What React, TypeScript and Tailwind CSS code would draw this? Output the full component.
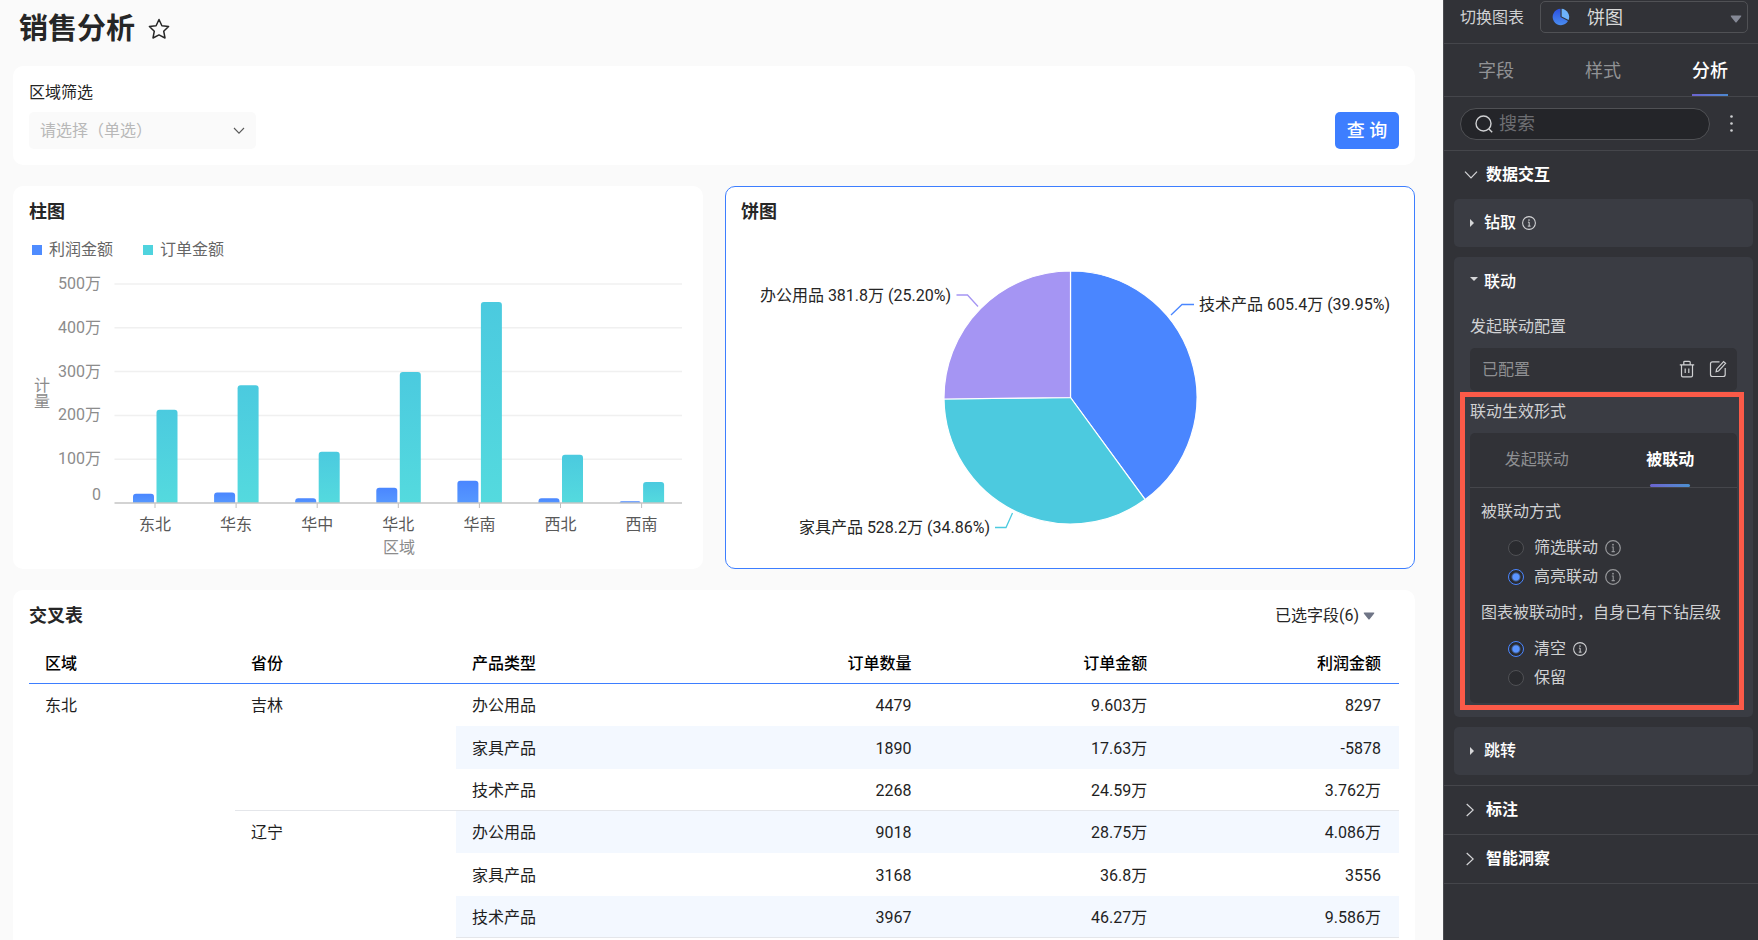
import React from "react";

const regions = [
  { name: "东北", profit: 21, orders: 213 },
  { name: "华东", profit: 24, orders: 269 },
  { name: "华中", profit: 11, orders: 117 },
  { name: "华北", profit: 35, orders: 299 },
  { name: "华南", profit: 51, orders: 459 },
  { name: "西北", profit: 11, orders: 110 },
  { name: "西南", profit: 4, orders: 48 },
];

const BASE_Y = 504;
const UNIT = 43.8;
const STEP = 81.1;
const PLOT_LEFT = 114.5;
const PLOT_RIGHT = 682;

function barPath(x: number, top: number, width: number) {
  const h = BASE_Y - top;
  const r = Math.min(3, h);
  return `M${x} ${BASE_Y}V${top + r}Q${x} ${top} ${x + r} ${top}H${x + width - r}Q${x + width} ${top} ${x + width} ${top + r}V${BASE_Y}Z`;
}

function BarChart() {
  return (
    <svg viewBox="14 263 688 306" className="min-h-0 w-full flex-1" role="img" aria-label="柱图">
      <defs>
        <linearGradient id="barBlue" x1="0" y1="0" x2="0" y2="1">
          <stop offset="0" stopColor="#4a86ff" />
          <stop offset="1" stopColor="#5698ff" />
        </linearGradient>
        <linearGradient id="barTeal" x1="0" y1="0" x2="0" y2="1">
          <stop offset="0" stopColor="#4bcadf" />
          <stop offset="1" stopColor="#54dade" />
        </linearGradient>
      </defs>
      {[1, 2, 3, 4, 5].map((n) => (
        <g key={n}>
          <line x1={PLOT_LEFT} x2={PLOT_RIGHT} y1={BASE_Y - n * UNIT} y2={BASE_Y - n * UNIT} stroke="#f0f0f0" strokeWidth="1.5" />
          <text x="101" y={BASE_Y - n * UNIT + 5} textAnchor="end" fontSize="16" fill="#8c8c8c">
            {n}00万
          </text>
        </g>
      ))}
      <text x="101" y="501" textAnchor="end" fontSize="16" fill="#8c8c8c">0</text>
      <text x="42" y="392" textAnchor="middle" fontSize="16" fill="#8c8c8c">计</text>
      <text x="42" y="408" textAnchor="middle" fontSize="16" fill="#8c8c8c">量</text>
      {regions.map((r, i) => {
        const cx = 155 + i * STEP;
        return (
          <g key={r.name}>
            <path d={barPath(cx - 22, BASE_Y - (r.profit * UNIT) / 100, 21)} fill="url(#barBlue)" />
            <path d={barPath(cx + 1.5, BASE_Y - (r.orders * UNIT) / 100, 21)} fill="url(#barTeal)" />
            <line x1={cx} x2={cx} y1={BASE_Y} y2={BASE_Y + 5} stroke="#bfbfbf" />
            <text x={cx} y="531" textAnchor="middle" fontSize="16" fill="#595959">{r.name}</text>
          </g>
        );
      })}
      <line x1={PLOT_LEFT} x2={PLOT_RIGHT} y1={BASE_Y} y2={BASE_Y} stroke="#c4c4c4" strokeWidth="1.5" />
      <text x="399" y="554" textAnchor="middle" fontSize="16" fill="#8c8c8c">区域</text>
    </svg>
  );
}

const PIE = { cx: 1070.5, cy: 398.5, r: 126.5 };
const slices = [
  { from: 0, to: 0.3995, fill: "#4a86ff" },
  { from: 0.3995, to: 0.7481, fill: "#4ccadf" },
  { from: 0.7481, to: 1, fill: "#a595f3" },
];

function slicePath(from: number, to: number) {
  const point = (t: number) => {
    const a = t * Math.PI * 2;
    return `${PIE.cx + PIE.r * Math.sin(a)} ${PIE.cy - PIE.r * Math.cos(a)}`;
  };
  return `M${PIE.cx} ${PIE.cy}L${point(from)}A${PIE.r} ${PIE.r} 0 0 1 ${point(to)}Z`;
}

function PieChart() {
  return (
    <svg viewBox="726 225 688 344" className="min-h-0 w-full flex-1" role="img" aria-label="饼图">
      {slices.map((s) => (
        <path key={s.fill} d={slicePath(s.from, s.to)} fill={s.fill} stroke="#fff" strokeWidth="1.2" strokeLinejoin="round" />
      ))}
      <g fill="none" strokeWidth="1.3">
        <path d="M1171 316L1182 305.5H1194" stroke="#4a86ff" />
        <path d="M978 307.5L967.5 296H956.5" stroke="#a595f3" />
        <path d="M1012.5 514L1006 528.5H995" stroke="#4ccadf" />
      </g>
      <g fontSize="16" fill="#262626">
        <text x="1199" y="311">技术产品 605.4万 (39.95%)</text>
        <text x="951" y="302" textAnchor="end">办公用品 381.8万 (25.20%)</text>
        <text x="990" y="534" textAnchor="end">家具产品 528.2万 (34.86%)</text>
      </g>
    </svg>
  );
}

const provinces = [
  {
    name: "吉林",
    rows: [
      ["办公用品", "4479", "9.603万", "8297"],
      ["家具产品", "1890", "17.63万", "-5878"],
      ["技术产品", "2268", "24.59万", "3.762万"],
    ],
  },
  {
    name: "辽宁",
    rows: [
      ["办公用品", "9018", "28.75万", "4.086万"],
      ["家具产品", "3168", "36.8万", "3556"],
      ["技术产品", "3967", "46.27万", "9.586万"],
    ],
  },
];

function CrossTable() {
  return (
    <table className="w-full table-fixed border-separate border-spacing-0 text-base leading-6 text-[#1f1f1f]">
      <colgroup>
        <col className="w-[206px]" />
        <col className="w-[221px]" />
        <col />
        <col />
        <col />
        <col />
      </colgroup>
      <thead>
        <tr className="h-10 text-black">
          {["区域", "省份", "产品类型"].map((h) => (
            <th key={h} scope="col" className="border-b border-[#3d7eff] px-4 text-left font-medium">{h}</th>
          ))}
          {["订单数量", "订单金额", "利润金额"].map((h) => (
            <th key={h} scope="col" className="border-b border-[#3d7eff] px-4 text-right font-medium last:pr-[18px]">{h}</th>
          ))}
        </tr>
      </thead>
      <tbody>
        {provinces.map((p, pi) =>
          p.rows.map((row, ri) => {
            const last = ri === p.rows.length - 1;
            const striped = (pi * 3 + ri) % 2 === 1;
            const tone = `${striped ? "bg-[#f3f8ff]" : ""} ${last ? "border-b border-[#e4e6ea]" : ""}`;
            return (
              <tr key={p.name + row[0]} className={ri === 1 ? "h-[43px]" : "h-[42px]"}>
                {pi === 0 && ri === 0 && (
                  <th scope="rowgroup" rowSpan={6} className="px-4 pt-2.5 text-left align-top font-normal">东北</th>
                )}
                {ri === 0 && (
                  <th
                    scope="rowgroup"
                    rowSpan={3}
                    className={`px-4 pt-2.5 text-left align-top font-normal ${pi === 0 ? "border-b border-[#e4e6ea]" : ""}`}
                  >
                    {p.name}
                  </th>
                )}
                <td className={`px-4 pt-0.5 ${tone}`}>{row[0]}</td>
                <td className={`px-4 pt-0.5 text-right ${tone}`}>{row[1]}</td>
                <td className={`px-4 pt-0.5 text-right ${tone}`}>{row[2]}</td>
                <td className={`px-4 pt-0.5 pr-[18px] text-right ${tone}`}>{row[3]}</td>
              </tr>
            );
          })
        )}
      </tbody>
    </table>
  );
}

function InfoIcon({ className }: { className: string }) {
  return (
    <svg viewBox="0 0 16 16" className={className} fill="none" stroke="currentColor" aria-hidden="true">
      <circle cx="8" cy="8" r="7.3" strokeWidth="1.2" />
      <path d="M6.8 7H8.2V11.5M6.6 11.6H9.8" strokeWidth="1.1" />
      <circle cx="8" cy="4.7" r="0.9" fill="currentColor" stroke="none" />
    </svg>
  );
}

function RadioRow({ name, label, checked, info }: { name: string; label: string; checked?: boolean; info?: string }) {
  return (
    <div className="flex h-[29px] items-center">
      <label className="flex items-center gap-2.5">
        <input
          type="radio"
          name={name}
          defaultChecked={checked}
          className="size-4 appearance-none rounded-full border border-[#505155] bg-[#2a2b2f] checked:border-[#4a86ff] checked:bg-[radial-gradient(circle,#5a94ff_3px,#2a2b2f_5px)]"
        />
        <span className="text-base leading-6 text-[#d0d1d3]">{label}</span>
      </label>
      {info && (
        <span className="ml-[7px]">
          <InfoIcon className={info} />
        </span>
      )}
    </div>
  );
}

function FoldCard({ title, info }: { title: string; info?: boolean }) {
  return (
    <button type="button" className="flex h-12 w-full items-center rounded-[5px] bg-[#3a3c43] px-4 text-white">
      <svg viewBox="0 0 4 8" className="h-2 w-1 text-[#d5d6d8]" fill="currentColor" aria-hidden="true">
        <path d="M0 0L4 4L0 8Z" />
      </svg>
      <span className="ml-2.5 text-base leading-6 font-medium">{title}</span>
      {info && (
        <span className="ml-1.5">
          <InfoIcon className="size-3.5 text-[#d5d6d8]" />
        </span>
      )}
    </button>
  );
}

function SectionRow({ title }: { title: string }) {
  return (
    <button type="button" className="flex h-[49px] w-full items-center border-b border-[#45464b] pl-[22px] text-white">
      <svg viewBox="0 0 8 14" className="h-3.5 w-2 text-[#d5d6d8]" fill="none" stroke="currentColor" strokeWidth="1.2" aria-hidden="true">
        <path d="M0.7 1L7.2 7L0.7 13" />
      </svg>
      <span className="ml-3 text-base leading-6 font-bold">{title}</span>
    </button>
  );
}

function Sidebar() {
  return (
    <aside className="w-[315px] shrink-0 overflow-hidden border-l border-[#4b4c51] bg-[#313237] text-[#d0d1d3]">
      <div className="flex h-11 items-center border-b border-[#45464b] pr-2.5 pb-[9px] pl-4">
        <label htmlFor="chart-type" className="pt-0.5 text-base leading-6">切换图表</label>
        <div className="relative ml-4 flex-1">
          <select
            id="chart-type"
            className="h-8 w-full appearance-none rounded-[5px] border border-[#505155] bg-transparent pt-0.5 pl-[46px] text-lg leading-6 text-[#d8d9da]"
          >
            <option>饼图</option>
          </select>
          <svg viewBox="0 0 18 18" className="pointer-events-none absolute top-[7px] left-3 size-[18px]" aria-hidden="true">
            <defs>
              <linearGradient id="pieIcon" x1="0" y1="0" x2="0" y2="1">
                <stop offset="0" stopColor="#2b4fe0" />
                <stop offset="1" stopColor="#4a8df0" />
              </linearGradient>
            </defs>
            <path d="M8.5 0.8A8.2 8.2 0 1 0 16 13L8.5 9Z" fill="url(#pieIcon)" />
            <path d="M9.6 0.8A8.2 8.2 0 0 1 16.6 12L9.6 8.4Z" fill="#6db2fa" />
          </svg>
          <svg viewBox="0 0 12 8" className="pointer-events-none absolute top-3.5 right-1.5 h-2 w-3" aria-hidden="true">
            <path d="M1.5 0.5H10.5Q12 0.5 11 1.7L6.8 7Q6 8 5.2 7L1 1.7Q0 0.5 1.5 0.5Z" fill="#858996" />
          </svg>
        </div>
      </div>

      <div role="tablist" className="flex h-[53px] justify-between border-b border-[#45464b] pr-[30px] pl-[34px] text-lg leading-6">
        <button type="button" role="tab" aria-selected="false" className="pt-0.5 text-[#919295]">字段</button>
        <button type="button" role="tab" aria-selected="false" className="pt-0.5 text-[#919295]">样式</button>
        <button type="button" role="tab" aria-selected="true" className="relative pt-0.5 font-medium text-white">
          分析
          <span className="absolute inset-x-0 bottom-0 h-0.5 bg-linear-to-r from-[#6b63d0] to-[#4a88d0]" />
        </button>
      </div>

      <div className="flex h-[54px] items-center border-b border-[#45464b] pl-4">
        <label className="flex h-8 w-[250px] items-center rounded-full border border-[#505155] bg-[#242529] pl-3.5">
          <svg viewBox="0 0 18 18" className="size-[18px] shrink-0 text-[#d0d1d3]" fill="none" stroke="currentColor" strokeWidth="1.4" aria-hidden="true">
            <circle cx="8.5" cy="8.5" r="7.5" />
            <path d="M13.9 13.9L17.2 17.2" />
          </svg>
          <input
            type="text"
            aria-label="搜索"
            placeholder="搜索"
            className="ml-1.5 w-40 bg-transparent text-lg leading-6 outline-none placeholder:text-[#6d6e72]"
          />
        </label>
        <button type="button" aria-label="更多" className="ml-4 p-1">
          <svg viewBox="0 0 3 17" className="h-[17px] w-[3px] text-[#d0d1d3]" fill="currentColor">
            <circle cx="1.5" cy="1.5" r="1.3" />
            <circle cx="1.5" cy="8.5" r="1.3" />
            <circle cx="1.5" cy="15.5" r="1.3" />
          </svg>
        </button>
      </div>

      <button type="button" className="flex h-12 w-full items-center pl-5 text-white">
        <svg viewBox="0 0 14 8" className="h-2 w-3.5 text-[#d5d6d8]" fill="none" stroke="currentColor" strokeWidth="1.2" aria-hidden="true">
          <path d="M1 0.7L7 7L13 0.7" />
        </svg>
        <span className="ml-2 text-base leading-6 font-bold">数据交互</span>
      </button>

      <div className="flex flex-col gap-2.5 border-b border-[#45464b] pr-[5px] pb-2.5 pl-2.5">
        <FoldCard title="钻取" info />

        <section className="relative rounded-[5px] bg-[#3a3c43] px-4 pt-[13px] pb-3.5">
          <button type="button" className="flex h-6 items-center text-white">
            <svg viewBox="0 0 8 4" className="mb-1.5 h-1 w-2 text-[#d5d6d8]" fill="currentColor" aria-hidden="true">
              <path d="M0 0H8L4 4Z" />
            </svg>
            <span className="ml-1.5 text-base leading-6 font-medium">联动</span>
          </button>
          <h3 className="mt-[21px] text-base leading-6">发起联动配置</h3>
          <div className="mt-[9px] flex h-[43px] items-center rounded-[5px] bg-[#313237] pr-2.5 pl-3">
            <span className="flex-1 text-base leading-6 text-[#8e8f92]">已配置</span>
            <button type="button" aria-label="删除" className="pb-0.5">
              <svg viewBox="0 0 16 18" className="h-[18px] w-4" fill="none" stroke="currentColor" strokeWidth="1.2" aria-hidden="true">
                <path d="M0.8 4.8H15.2M4.8 4.6V2.2Q4.8 1.3 5.7 1.3H10.3Q11.2 1.3 11.2 2.2V4.6M2.5 4.8V15.5Q2.5 16.8 3.8 16.8H12.2Q13.5 16.8 13.5 15.5V4.8M6.2 8.5V13M9.8 8.5V13" />
              </svg>
            </button>
            <button type="button" aria-label="编辑" className="ml-3.5 pb-0.5">
              <svg viewBox="0 0 18 18" className="size-[18px]" fill="none" stroke="currentColor" strokeWidth="1.2" aria-hidden="true">
                <path d="M10.5 1.8H3.5Q1.5 1.8 1.5 3.8V14.5Q1.5 16.5 3.5 16.5H14.2Q16.2 16.5 16.2 14.5V8" />
                <path d="M14.6 1.6L16.6 3.4L9.6 11L7.1 11.6L7.6 9.2Z" />
              </svg>
            </button>
          </div>

          <h3 className="mt-[9px] text-base leading-6">联动生效形式</h3>
          <div className="mt-[9px] rounded-[5px] bg-[#313237] pb-[11px]">
            <div role="tablist" className="grid h-[55px] grid-cols-2 border-b border-[#45464b] text-base leading-6">
              <button type="button" role="tab" aria-selected="false" className="text-[#8e8f92]">发起联动</button>
              <button type="button" role="tab" aria-selected="true" className="relative font-bold text-white">
                被联动
                <span className="absolute bottom-0 left-1/2 h-[3px] w-10 -translate-x-1/2 rounded-full bg-linear-to-r from-[#6b63d0] to-[#4a90d0]" />
              </button>
            </div>
            <fieldset className="pt-3">
              <legend className="float-left w-full pl-[11px] text-base leading-6">被联动方式</legend>
              <div className="clear-both pt-[9px] pl-[38px]">
                <RadioRow name="mode" label="筛选联动" info="size-4 text-[#97989b]" />
                <RadioRow name="mode" label="高亮联动" checked info="size-4 text-[#97989b]" />
              </div>
            </fieldset>
            <fieldset className="pt-2.5">
              <legend className="float-left w-full pl-[11px] text-base leading-6 whitespace-nowrap">图表被联动时，自身已有下钻层级</legend>
              <div className="clear-both pt-[9px] pl-[38px]">
                <RadioRow name="drill" label="清空" checked info="size-3.5 text-[#d0d1d3]" />
                <RadioRow name="drill" label="保留" />
              </div>
            </fieldset>
          </div>
          <span className="pointer-events-none absolute top-[135px] right-[9px] bottom-[7px] left-1.5 border-[5px] border-[#fb5a48]" />
        </section>

        <FoldCard title="跳转" />
      </div>
      <SectionRow title="标注" />
      <SectionRow title="智能洞察" />
    </aside>
  );
}

function LegendItem({ swatch, label }: { swatch: string; label: string }) {
  return (
    <li className="flex items-center gap-[7px]">
      <span className={`size-2.5 ${swatch}`} />
      {label}
    </li>
  );
}

export default function App() {
  return (
    <div className="flex h-screen overflow-hidden bg-[#fafafa] font-['Roboto','Noto_Sans_CJK_SC',sans-serif] text-[#262626]">
      <main className="flex min-w-0 flex-1 flex-col overflow-hidden pr-7 pl-[13px]">
        <header className="flex h-[66px] items-center gap-[13px] pb-2 pl-1.5">
          <h1 className="text-[29px] leading-10 font-bold">销售分析</h1>
          <button type="button" aria-label="收藏">
            <svg viewBox="0 0 22 22" className="size-[22px]" fill="none" stroke="#262626" strokeWidth="1.5" strokeLinejoin="round" aria-hidden="true">
              <path d="M11 1.5L13.9 7.7L20.6 8.5L15.7 13.2L17 20L11 16.9L5 20L6.3 13.2L1.4 8.5L8.1 7.7Z" />
            </svg>
          </button>
        </header>

        <section className="flex shrink-0 items-end justify-between rounded-[10px] bg-white p-4 pt-[15px]">
          <div>
            <label htmlFor="region" className="block text-base leading-6">区域筛选</label>
            <div className="relative mt-[7px]">
              <select
                id="region"
                className="h-[37px] w-[227px] appearance-none rounded-[5px] bg-[#fafafa] px-[11px] text-base leading-6 text-[#b8b8b8]"
              >
                <option>请选择（单选）</option>
              </select>
              <svg viewBox="0 0 12 8" className="pointer-events-none absolute top-[15px] right-[11px] h-2 w-3" fill="none" stroke="#595959" strokeWidth="1.1" aria-hidden="true">
                <path d="M1 1L6 6.2L11 1" />
              </svg>
            </div>
          </div>
          <button type="button" className="h-[37px] w-16 rounded-[5px] bg-[#3d7eff] text-lg leading-6 font-medium text-white">查 询</button>
        </section>

        <div className="mt-[21px] grid shrink-0 grid-cols-2 gap-[22px]">
          <section className="flex h-[383px] flex-col rounded-[10px] border border-transparent bg-white pt-[13px]">
            <h2 className="pl-[15px] text-lg leading-6 font-bold">柱图</h2>
            <ul className="mt-3.5 flex gap-[30px] pl-[18px] text-base leading-6 text-[#666]">
              <LegendItem swatch="bg-[#4f8cff]" label="利润金额" />
              <LegendItem swatch="bg-[#4fd3de]" label="订单金额" />
            </ul>
            <BarChart />
          </section>
          <section className="flex h-[383px] flex-col rounded-[10px] border border-[#3d7eff] bg-white pt-[13px]">
            <h2 className="pl-[15px] text-lg leading-6 font-bold">饼图</h2>
            <PieChart />
          </section>
        </div>

        <section className="mt-[21px] flex-1 rounded-t-[10px] bg-white px-4 pt-3.5">
          <div className="flex items-center justify-between pr-6">
            <h2 className="text-lg leading-6 font-bold">交叉表</h2>
            <button type="button" className="flex items-center gap-1 text-base leading-6">
              已选字段(6)
              <svg viewBox="0 0 12 8" className="h-2 w-3" aria-hidden="true">
                <path d="M1.5 0.5H10.5Q12 0.5 11 1.7L6.8 7Q6 8 5.2 7L1 1.7Q0 0.5 1.5 0.5Z" fill="#6f7586" />
              </svg>
            </button>
          </div>
          <div className="pt-4">
            <CrossTable />
          </div>
        </section>
      </main>
      <Sidebar />
    </div>
  );
}
